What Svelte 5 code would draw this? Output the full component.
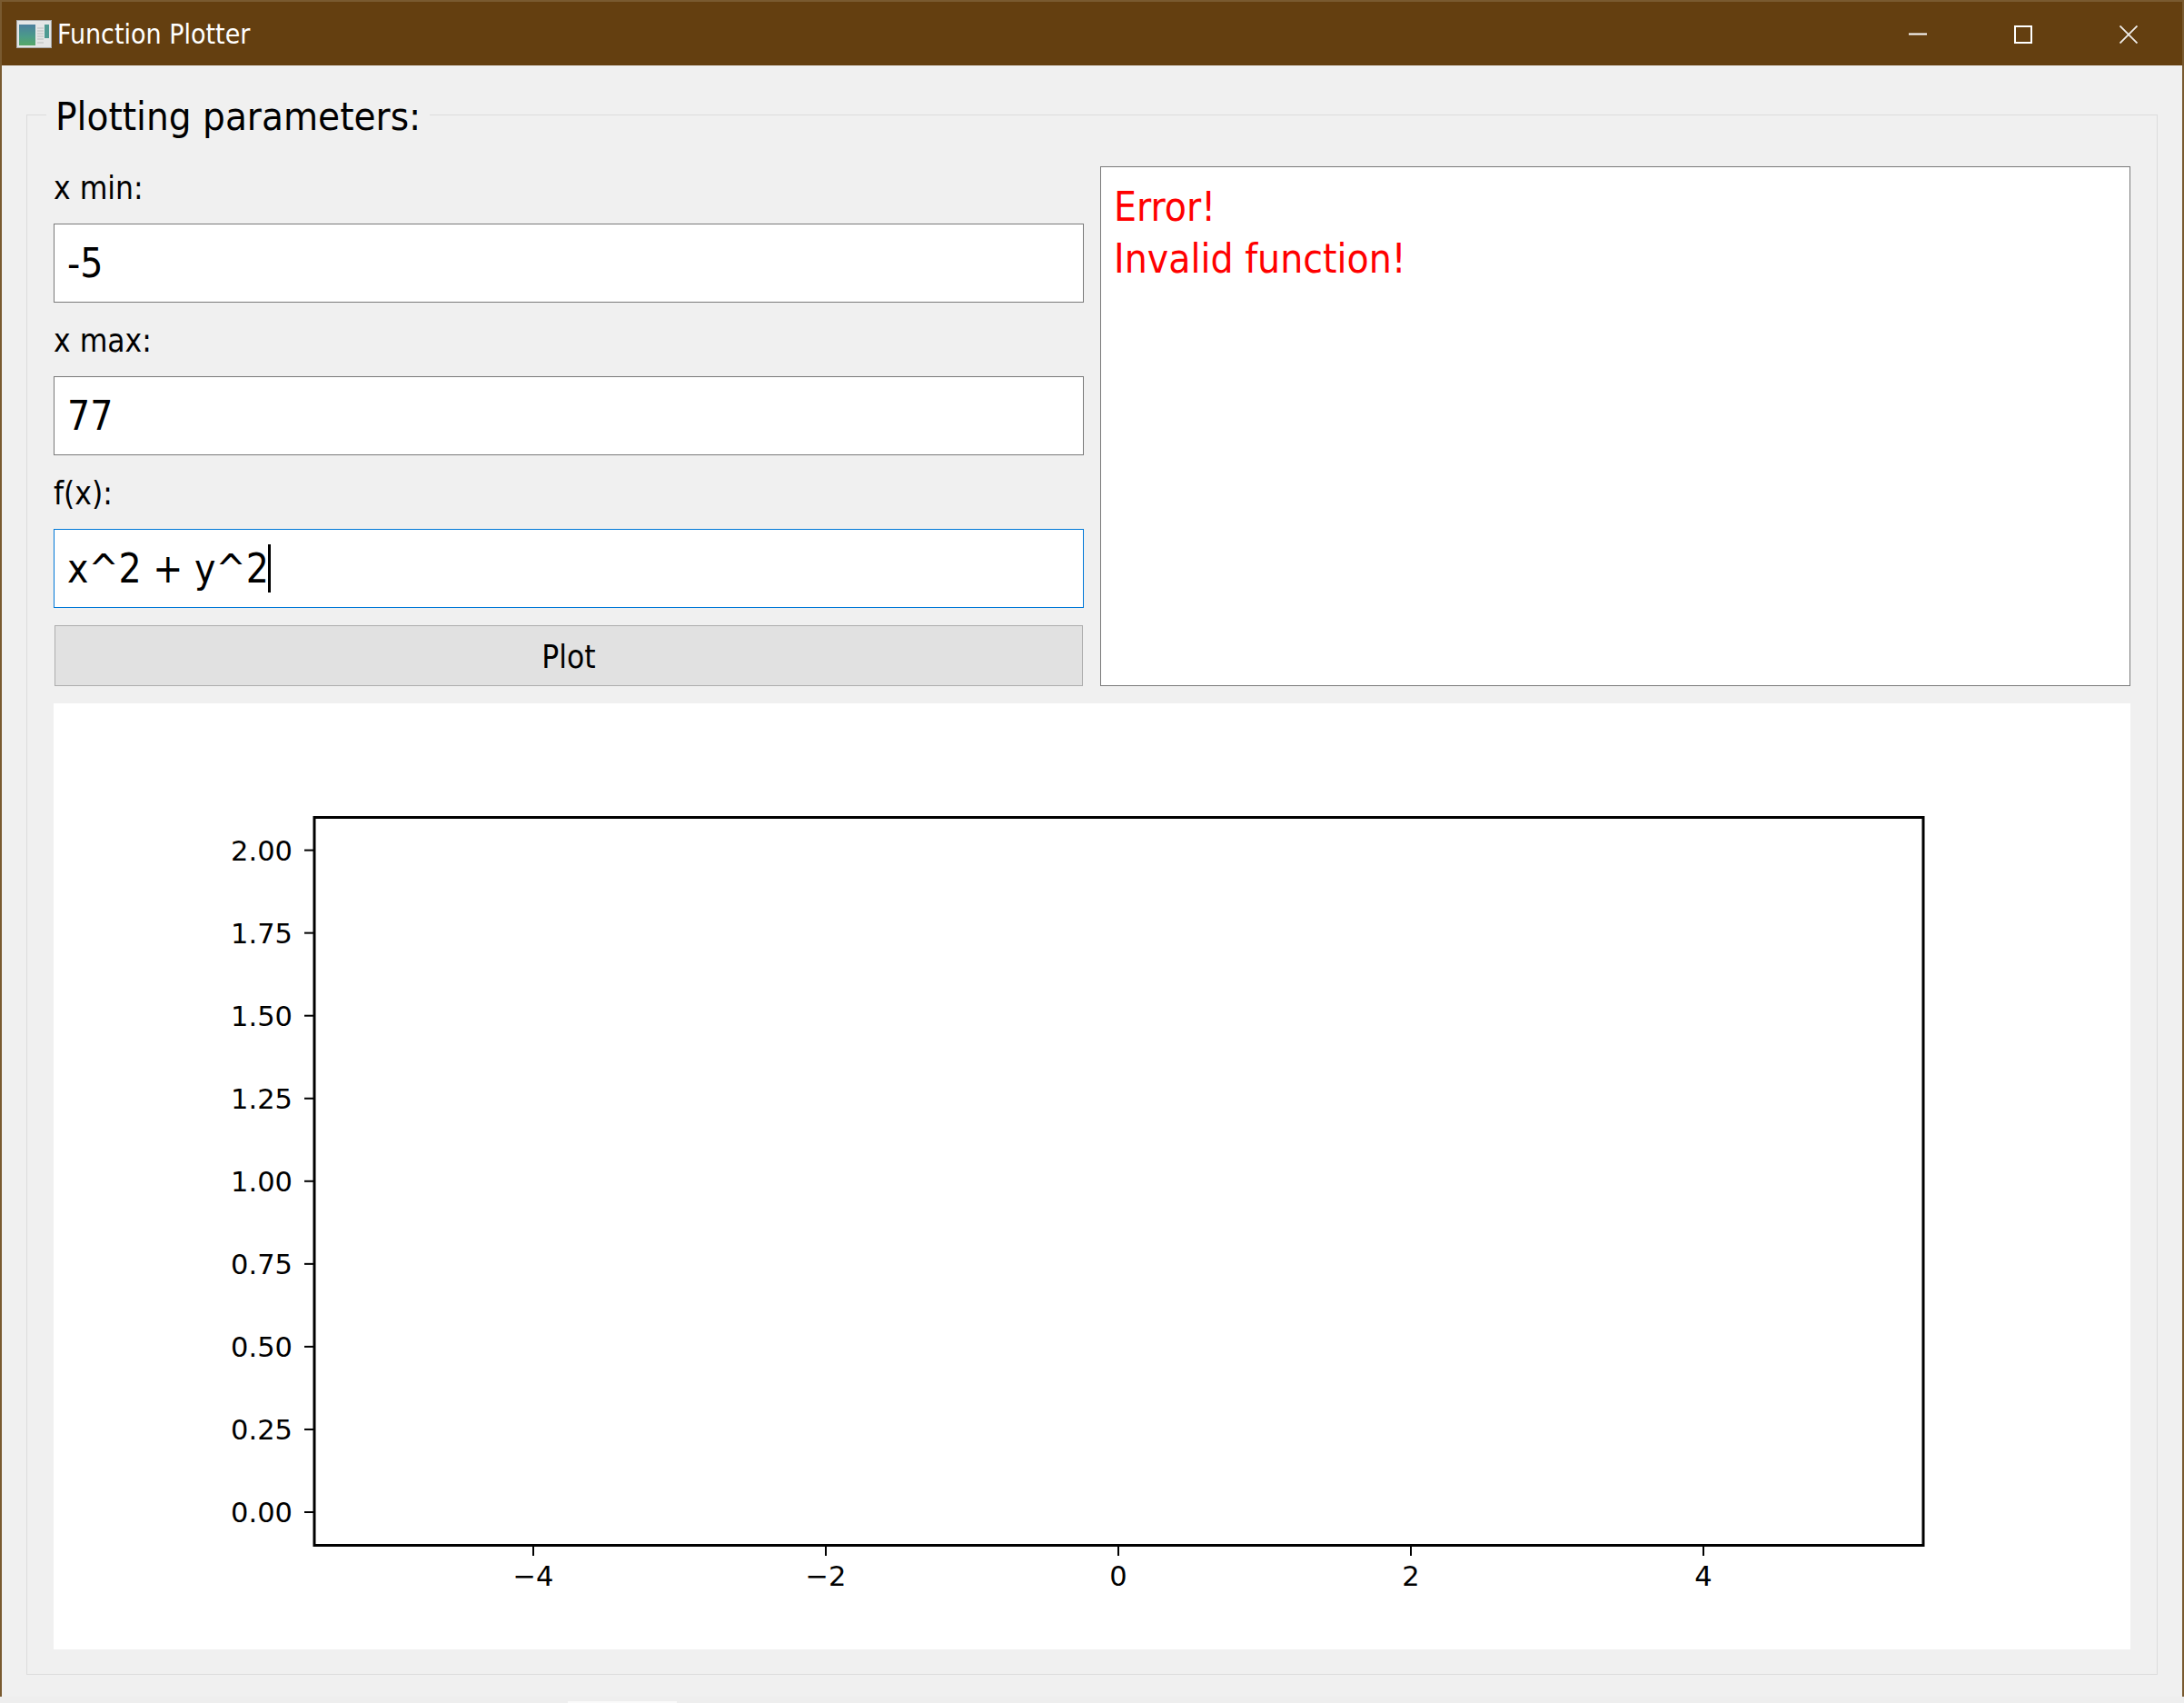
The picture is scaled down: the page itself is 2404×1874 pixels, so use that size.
<script>
  const yTicks = [0, 0.25, 0.5, 0.75, 1, 1.25, 1.5, 1.75, 2].map((v) => ({
    label: v.toFixed(2),
    y: 1664 - 774 - (v / 0.25) * 91.05
  }));
  const xTicks = [-4, -2, 0, 2, 4].map((v) => ({
    label: v < 0 ? '\u2212' + Math.abs(v) : String(v),
    x: 1231 - 59 + v * 161
  }));
</script>

<div class="window">
  <header class="titlebar">
    <div class="title">
      <svg class="appicon" viewBox="0 0 39 31" width="39" height="31">
        <rect x="0.5" y="0.5" width="38" height="30" fill="#e4e6e6" stroke="#a9a9a9" />
        <defs>
          <linearGradient id="g" x1="0" y1="0" x2="0" y2="1">
            <stop offset="0" stop-color="#4b7f9e" />
            <stop offset="0.55" stop-color="#4b9a8a" />
            <stop offset="1" stop-color="#57a868" />
          </linearGradient>
        </defs>
        <rect x="3" y="5" width="18" height="23" fill="url(#g)" />
        <path d="M23 9h7M23 12h7M23 15h7M23 18h7M23 21h7M23 25h7" stroke="#b9bcbc" stroke-width="1" />
        <rect x="31" y="5" width="5" height="15" fill="#4f9a92" />
      </svg>
      <span>Function Plotter</span>
    </div>
    <div class="controls">
      <svg width="20" height="20" viewBox="0 0 20 20"><path d="M0 9.5h20" stroke="#fff" stroke-width="2" /></svg>
      <svg width="20" height="20" viewBox="0 0 20 20"><rect x="1" y="1" width="18" height="18" fill="none" stroke="#fff" stroke-width="2" /></svg>
      <svg width="20" height="20" viewBox="0 0 20 20"><path d="M0.5 0.5L19.5 19.5M19.5 0.5L0.5 19.5" stroke="#f1eeea" stroke-width="1.8" /></svg>
    </div>
  </header>

  <main class="content">
    <fieldset class="group">
      <legend>Plotting parameters:</legend>
      <div class="top">
        <div class="form">
          <div class="label">x min:</div>
          <div class="input">-5</div>
          <div class="label">x max:</div>
          <div class="input">77</div>
          <div class="label">f(x):</div>
          <div class="input focus">x^2 + y^2<span class="caret"></span></div>
          <button class="plot-btn">Plot</button>
        </div>
        <div class="output">
          <div>Error!</div>
          <div>Invalid function!</div>
        </div>
      </div>
      <div class="figure">
        <svg width="2286" height="1041" viewBox="0 0 2286 1041">
          <rect x="287" y="125.5" width="1771" height="801" fill="none" stroke="#000" stroke-width="3" />
          {#each yTicks as t}
            <path d="M276 {t.y}H286" stroke="#000" stroke-width="2" />
            <text class="tick" x="263" y={t.y + 11} text-anchor="end">{t.label}</text>
          {/each}
          {#each xTicks as t}
            <path d="M{t.x} 928V938" stroke="#000" stroke-width="2" />
            <text class="tick" x={t.x} y="971" text-anchor="middle">{t.label}</text>
          {/each}
        </svg>
      </div>
    </fieldset>
  </main>
  <div class="strip"><span class="strip-mark"></span></div>
</div>

<style>
  :global(body) {
    margin: 0;
    background: #eeeeee;
  }
  .window {
    width: 2404px;
    height: 1874px;
    display: flex;
    flex-direction: column;
    font-family: "DejaVu Sans Condensed", "DejaVu Sans", sans-serif;
    font-stretch: condensed;
    color: #000;
    overflow: hidden;
  }
  .titlebar {
    box-sizing: border-box;
    height: 72px;
    flex: none;
    background: #643f10;
    border-top: 2px solid #795a30;
    border-left: 2px solid #795a30;
    border-right: 2px solid #795a30;
    display: flex;
    justify-content: space-between;
    align-items: center;
    color: #fff;
  }
  .title {
    display: flex;
    align-items: center;
    gap: 6px;
    padding-left: 16px;
    font-size: 30px;
  }
  .appicon {
    flex: none;
  }
  .controls {
    display: flex;
    gap: 96px;
    padding-right: 49px;
    padding-top: 1px;
  }
  .controls svg {
    display: block;
  }
  .content {
    box-sizing: border-box;
    height: 1795px;
    flex: none;
    background: #f0f0f0;
    border-left: 2px solid #795a30;
    border-right: 2px solid #795a30;
    padding: 54px 27px 24px 27px;
  }
  .group {
    box-sizing: border-box;
    height: 1717px;
    margin: 0;
    min-width: 0;
    padding: 0 29px 26px 29px;
    border: 1px solid #dcdcdc;
    position: relative;
  }
  legend {
    position: absolute;
    left: 21px;
    top: -34px;
    padding: 0 10px;
    background: #f0f0f0;
    font-size: 43.5px;
    line-height: 70px;
    white-space: nowrap;
  }
  .top {
    display: grid;
    grid-template-columns: 1134px 1134px;
    gap: 18px;
    padding-top: 56px;
  }
  .form {
    display: flex;
    flex-direction: column;
    gap: 18px;
  }
  .label {
    height: 45px;
    line-height: 49px;
    font-size: 35px;
  }
  .input {
    box-sizing: border-box;
    height: 87px;
    line-height: 85px;
    background: #fff;
    border: 1px solid #7a7a7a;
    padding-left: 14px;
    font-size: 44px;
  }
  .input.focus {
    border-color: #0078d7;
    display: flex;
    align-items: center;
  }
  .caret {
    width: 3px;
    height: 53px;
    background: #000;
    margin-left: -1px;
  }
  .plot-btn {
    box-sizing: border-box;
    height: 67px;
    margin: 1px 1px 0 1px;
    background: #e1e1e1;
    border: 1px solid #adadad;
    border-radius: 0;
    font-family: inherit;
    font-stretch: inherit;
    font-size: 35px;
    color: #000;
    padding: 3px 0 0;
  }
  .output {
    box-sizing: border-box;
    height: 572px;
    background: #fff;
    border: 1px solid #7a7a7a;
    padding: 15px 14px;
    color: #ff0000;
    font-size: 44px;
    line-height: 57px;
  }
  .figure {
    margin-top: 19px;
    height: 1041px;
    background: #fff;
  }
  .figure svg {
    display: block;
  }
  .tick {
    font-family: "DejaVu Sans", sans-serif;
    font-stretch: normal;
    font-size: 30.5px;
    fill: #000;
  }
  .strip {
    flex: 1;
    background: #eeeeee;
    position: relative;
  }
  .strip-mark {
    position: absolute;
    left: 625px;
    bottom: 0;
    width: 120px;
    height: 2px;
    background: #fafafa;
  }
</style>
